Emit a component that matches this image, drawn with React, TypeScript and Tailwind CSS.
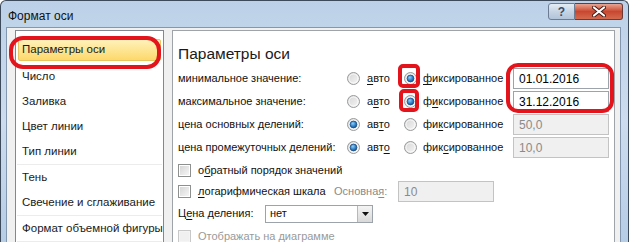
import React from 'react';

const U = ({ children }: { children: React.ReactNode }) => (
  <span className="underline decoration-1 underline-offset-[2px]">{children}</span>
);

const Radio = ({ checked }: { checked?: boolean }) => (
  <svg width="13" height="13" viewBox="0 0 13 13" className="shrink-0">
    <circle cx="6.5" cy="6.5" r="6" fill="url(#rbg)" stroke="#9a9b9c" strokeWidth="1" />
    <circle cx="6.5" cy="6.5" r="4.5" fill="none" stroke="#ffffff" strokeOpacity="0.7" strokeWidth="1" />
    {checked && <circle cx="6.5" cy="6.5" r="3.4" fill="url(#rdot)" stroke="#1d4f87" strokeWidth="0.8" />}
  </svg>
);

const Check = ({ disabled }: { disabled?: boolean }) => (
  <div
    className={`w-[13px] h-[13px] shrink-0 border ${
      disabled ? 'border-[#c8c8c8] bg-[#f4f4f4]' : 'border-[#8e8f8f] bg-white'
    } p-[1px]`}
  >
    <div
      className={`w-full h-full ${
        disabled ? 'bg-[#f0f0f0]' : 'bg-gradient-to-br from-[#d6d6d6] to-[#f6f6f6]'
      }`}
    />
  </div>
);

const Field = ({ value, disabled, w = 'w-[96px]' }: { value: string; disabled?: boolean; w?: string }) => (
  <div
    className={`${w} h-[21px] shrink-0 flex items-center px-[5px] border text-[12px] ${
      disabled ? 'bg-[#f0f0f0] border-[#c3c3c3] text-[#8a8a8a]' : 'bg-white border-[#9da3ab] text-black'
    }`}
  >
    {value}
  </div>
);

const navItems: { label: string; sep?: boolean }[] = [
  { label: 'Параметры оси' },
  { label: 'Число' },
  { label: 'Заливка' },
  { label: 'Цвет линии' },
  { label: 'Тип линии', sep: true },
  { label: 'Тень' },
  { label: 'Свечение и сглаживание', sep: true },
  { label: 'Формат объемной фигуры', sep: true },
];

type AxisRow = {
  label: string;
  auto: boolean;
  autoLabel: React.ReactNode;
  fixedLabel: React.ReactNode;
  value: string;
};

const axisRows: AxisRow[] = [
  { label: 'минимальное значение:', auto: false, autoLabel: <><U>а</U>вто</>, fixedLabel: <><U>ф</U>иксированное</>, value: '01.01.2016' },
  { label: 'максимальное значение:', auto: false, autoLabel: <>а<U>в</U>то</>, fixedLabel: <>ф<U>и</U>ксированное</>, value: '31.12.2016' },
  { label: 'цена основных делений:', auto: true, autoLabel: <>ав<U>т</U>о</>, fixedLabel: <>фи<U>к</U>сированное</>, value: '50,0' },
  { label: 'цена промежуточных делений:', auto: true, autoLabel: <>авт<U>о</U></>, fixedLabel: <>фик<U>с</U>ированное</>, value: '10,0' },
];

export default function App() {
  return (
    <div
      className="relative w-[629px] h-[242px] overflow-hidden rounded-t-[6px] border-x border-t border-[#3c4a5c] bg-gradient-to-b from-[#bcd1e8] via-[#cddcee] to-[#b6cde6] text-[11px] text-[#111] whitespace-nowrap"
      style={{ fontFamily: '"Liberation Sans", Arial, sans-serif' }}
    >
      <svg width="0" height="0" className="absolute">
        <defs>
          <linearGradient id="rbg" x1="0" y1="0" x2="1" y2="1">
            <stop offset="0" stopColor="#d4d4d4" />
            <stop offset="1" stopColor="#f7f7f7" />
          </linearGradient>
          <radialGradient id="rdot" cx="0.4" cy="0.35" r="0.7">
            <stop offset="0" stopColor="#8fd0f7" />
            <stop offset="0.6" stopColor="#2f7fc8" />
            <stop offset="1" stopColor="#164a82" />
          </radialGradient>
        </defs>
      </svg>

      {/* Title bar */}
      <div className="flex items-start h-[26px]">
        <div className="pl-[7px] pt-[6px] text-[12px] leading-[18px] text-[#111]">Формат оси</div>
        <div className="ml-auto mr-[5px] mt-[2px] flex">
          <div className="w-[27px] h-[17px] rounded-l-[3px] border border-[#6b7c93] bg-gradient-to-b from-[#e4ecf5] via-[#c6d4e4] to-[#b2c4da] flex items-center justify-center text-[12px] font-bold text-[#3b4d66] leading-none">
            ?
          </div>
          <div className="w-[48px] h-[17px] rounded-r-[3px] border border-l-0 border-[#6b3a36] bg-gradient-to-b from-[#e8a493] via-[#c9462f] to-[#d46a4e] flex items-center justify-center">
            <svg width="14" height="11" viewBox="0 0 14 11">
              <path d="M2 1.5 L12 9.5 M12 1.5 L2 9.5" stroke="#4a1a14" strokeWidth="4" strokeLinecap="round" />
              <path d="M2 1.5 L12 9.5 M12 1.5 L2 9.5" stroke="#ffffff" strokeWidth="2.2" strokeLinecap="round" />
            </svg>
          </div>
        </div>
      </div>

      {/* Dialog body */}
      <div className="ml-[5px] mr-[7px] h-[230px] border-x border-t border-[#8497b0] bg-[#f0f0f0] flex gap-[8px] pl-[8px] pr-[5px] pt-[2px]">
        {/* Left nav list */}
        <div className="w-[149px] shrink-0 h-[240px] border border-[#828790] bg-white pt-[8px] px-[1px] text-[11.5px] text-[#1a1a1a]">
          {navItems.map((it, i) => (
            <div key={it.label} className={it.sep ? 'border-b border-[#ececec]' : ''}>
              {i === 0 ? (
                <div className="h-[22px] mb-[3px] mx-[1px] rounded-[2px] border border-[#e8c463] bg-gradient-to-b from-[#fff1b8] to-[#fcd96a] flex items-center pl-[3px]">
                  {it.label}
                </div>
              ) : (
                <div className="h-[25px] flex items-center pl-[5px]">{it.label}</div>
              )}
            </div>
          ))}
        </div>

        {/* Right panel */}
        <div className="flex-1 h-[240px] border border-[#9fa4ab] bg-white pl-[5px] pt-[12px]">
          <div className="text-[15.5px] leading-[22px] text-[#1a1a1a] mb-[2px]">Параметры оси</div>

          {axisRows.map((r) => (
            <div key={r.label} className="flex items-center h-[23px]">
              <div className="w-[169px] shrink-0">{r.label}</div>
              <div className="w-[57px] shrink-0 flex items-center gap-[7px]">
                <Radio checked={r.auto} />
                <span>{r.autoLabel}</span>
              </div>
              <div className="w-[109px] shrink-0 flex items-center gap-[6px]">
                <Radio checked={!r.auto} />
                <span>{r.fixedLabel}</span>
              </div>
              <Field value={r.value} disabled={r.auto} />
            </div>
          ))}

          <div className="flex items-center h-[21px] mt-[1px]">
            <Check />
            <span className="ml-[7px]">
              о<U>б</U>ратный порядок значений
            </span>
          </div>
          <div className="flex items-center h-[21px]">
            <Check />
            <span className="ml-[7px] w-[136px] shrink-0">
              <U>л</U>огарифмическая шкала
            </span>
            <span className="text-[#8a8a8a] w-[64px] shrink-0">
              Основна<U>я</U>:
            </span>
            <Field value="10" disabled />
          </div>
          <div className="flex items-center h-[23px]">
            <span className="w-[87px] shrink-0">
              Ц<U>е</U>на деления:
            </span>
            <div className="w-[108px] h-[18px] border border-[#9da3ab] bg-white flex items-center">
              <span className="pl-[4px] flex-1">нет</span>
              <div className="w-[15px] h-full border-l border-[#b5b9be] bg-gradient-to-b from-[#f4f4f4] to-[#d9d9d9] flex items-center justify-center">
                <svg width="7" height="4" viewBox="0 0 7 4">
                  <path d="M0 0 H7 L3.5 4 Z" fill="#111" />
                </svg>
              </div>
            </div>
          </div>
          <div className="flex items-center h-[23px]">
            <Check disabled />
            <span className="ml-[7px] text-[#9a9a9a]">
              Отображат<U>ь</U> на диаграмме
            </span>
          </div>
        </div>
      </div>

      {/* Red annotation marks */}
      <div className="absolute left-[8px] top-[35px] w-[152px] h-[33px] rounded-[14px] border-[4px] border-[#e3141c]" />
      <div className="absolute left-[397px] top-[63px] w-[22px] h-[24px] rounded-[5px] border-[4px] border-[#e3141c]" />
      <div className="absolute left-[398px] top-[88px] w-[20px] h-[23px] rounded-[5px] border-[4px] border-[#e3141c]" />
      <div className="absolute left-[505px] top-[62px] w-[108px] h-[50px] rounded-[12px] border-[4px] border-[#e3141c]" />
    </div>
  );
}
